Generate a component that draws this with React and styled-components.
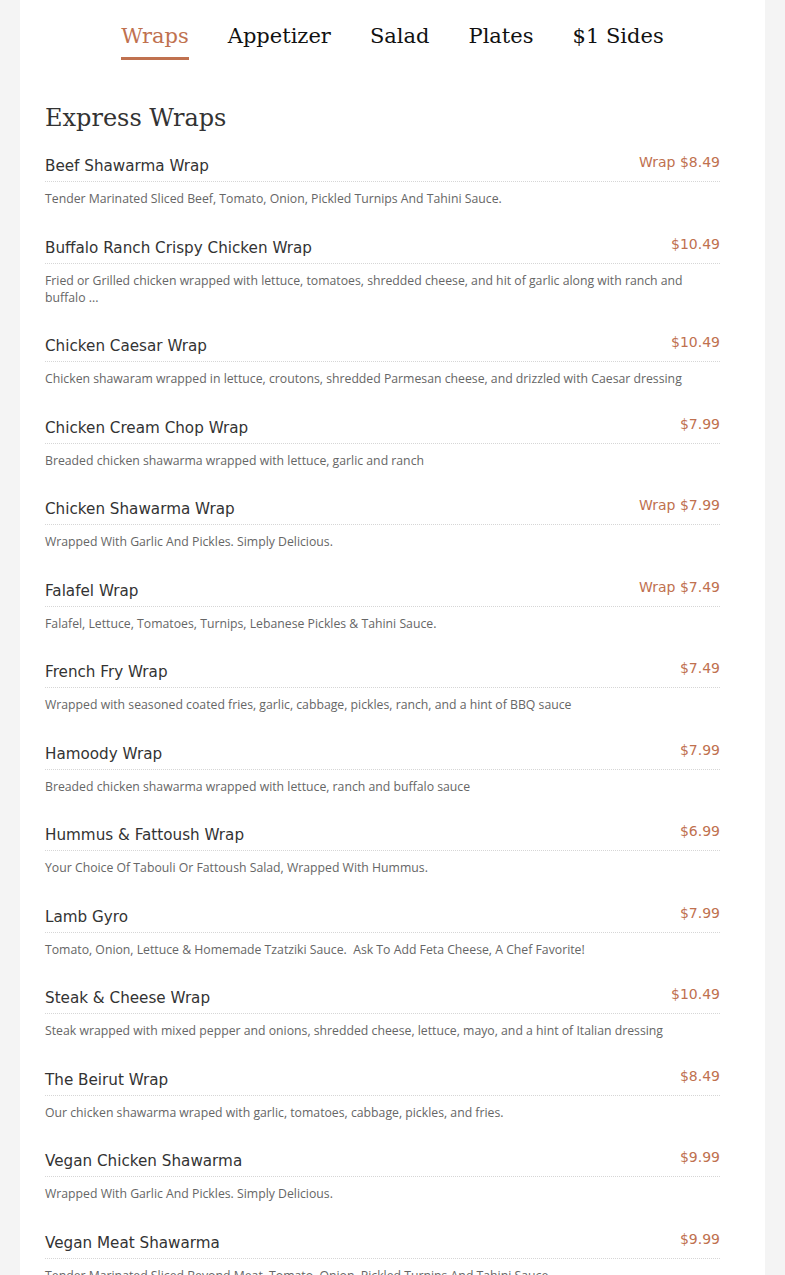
import styled, { createGlobalStyle } from 'styled-components';

const GlobalStyle = createGlobalStyle`
  html, body {
    margin: 0;
    padding: 0;
    background: #f4f4f4;
  }
`;

const accent = '#c0714f';

const Page = styled.div`
  padding: 0 20px;
`;

const Card = styled.div`
  background: #fff;
  padding: 0 45px 0 25px;
  min-height: 1275px;
  box-sizing: border-box;
`;

const Tabs = styled.nav`
  display: flex;
  justify-content: center;
  gap: 39px;
  padding-top: 22px;
  padding-left: 20px;
`;

const Tab = styled.a`
  font-family: "DejaVu Serif", "Liberation Serif", serif;
  font-size: 21px;
  line-height: 28px;
  color: ${p => (p.$active ? accent : '#111')};
  padding-bottom: 7px;
  border-bottom: 3px solid ${p => (p.$active ? accent : 'transparent')};
  cursor: pointer;
`;

const Title = styled.h2`
  font-family: "DejaVu Serif", "Liberation Serif", serif;
  font-weight: normal;
  font-size: 24px;
  line-height: 32px;
  color: #333;
  margin: 42px 0 22px;
`;

const Item = styled.div`
  margin-bottom: 30.5px;
`;

const ItemHead = styled.div`
  display: flex;
  justify-content: space-between;
  align-items: flex-start;
  padding-bottom: 5px;
  border-bottom: 1px dotted #d6d6d6;
`;

const Name = styled.div`
  font-family: "DejaVu Sans", "Noto Sans", sans-serif;
  font-size: 15.2px;
  line-height: 20px;
  color: #333;
`;

const Price = styled.div`
  font-family: "DejaVu Sans", "Noto Sans", sans-serif;
  font-size: 14px;
  line-height: 12px;
  color: ${accent};
  white-space: nowrap;
`;

const Desc = styled.p`
  font-family: "Open Sans", "Noto Sans", sans-serif;
  font-size: 12.25px;
  line-height: 17px;
  color: #666;
  margin: 8px 0 0;
`;

const tabs = ['Wraps', 'Appetizer', 'Salad', 'Plates', '$1 Sides'];

const items = [
  ['Beef Shawarma Wrap', 'Wrap $8.49', 'Tender Marinated Sliced Beef, Tomato, Onion, Pickled Turnips And Tahini Sauce.'],
  ['Buffalo Ranch Crispy Chicken Wrap', '$10.49', 'Fried or Grilled chicken wrapped with lettuce, tomatoes, shredded cheese, and hit of garlic along with ranch and buffalo ...'],
  ['Chicken Caesar Wrap', '$10.49', 'Chicken shawaram wrapped in lettuce, croutons, shredded Parmesan cheese, and drizzled with Caesar dressing'],
  ['Chicken Cream Chop Wrap', '$7.99', 'Breaded chicken shawarma wrapped with lettuce, garlic and ranch'],
  ['Chicken Shawarma Wrap', 'Wrap $7.99', 'Wrapped With Garlic And Pickles. Simply Delicious.'],
  ['Falafel Wrap', 'Wrap $7.49', 'Falafel, Lettuce, Tomatoes, Turnips, Lebanese Pickles & Tahini Sauce.'],
  ['French Fry Wrap', '$7.49', 'Wrapped with seasoned coated fries, garlic, cabbage, pickles, ranch, and a hint of BBQ sauce'],
  ['Hamoody Wrap', '$7.99', 'Breaded chicken shawarma wrapped with lettuce, ranch and buffalo sauce'],
  ['Hummus & Fattoush Wrap', '$6.99', 'Your Choice Of Tabouli Or Fattoush Salad, Wrapped With Hummus.'],
  ['Lamb Gyro', '$7.99', 'Tomato, Onion, Lettuce & Homemade Tzatziki Sauce.\u00a0 Ask To Add Feta Cheese, A Chef Favorite!'],
  ['Steak & Cheese Wrap', '$10.49', 'Steak wrapped with mixed pepper and onions, shredded cheese, lettuce, mayo, and a hint of Italian dressing'],
  ['The Beirut Wrap', '$8.49', 'Our chicken shawarma wraped with garlic, tomatoes, cabbage, pickles, and fries.'],
  ['Vegan Chicken Shawarma', '$9.99', 'Wrapped With Garlic And Pickles. Simply Delicious.'],
  ['Vegan Meat Shawarma', '$9.99', 'Tender Marinated Sliced Beyond Meat, Tomato, Onion, Pickled Turnips And Tahini Sauce.'],
];

export default function App() {
  return (
    <Page>
      <GlobalStyle />
      <Card>
        <Tabs>
          {tabs.map((t, i) => (
            <Tab key={t} $active={i === 0}>{t}</Tab>
          ))}
        </Tabs>
        <Title>Express Wraps</Title>
        {items.map(([name, price, desc]) => (
          <Item key={name}>
            <ItemHead>
              <Name>{name}</Name>
              <Price>{price}</Price>
            </ItemHead>
            <Desc>{desc}</Desc>
          </Item>
        ))}
      </Card>
    </Page>
  );
}
